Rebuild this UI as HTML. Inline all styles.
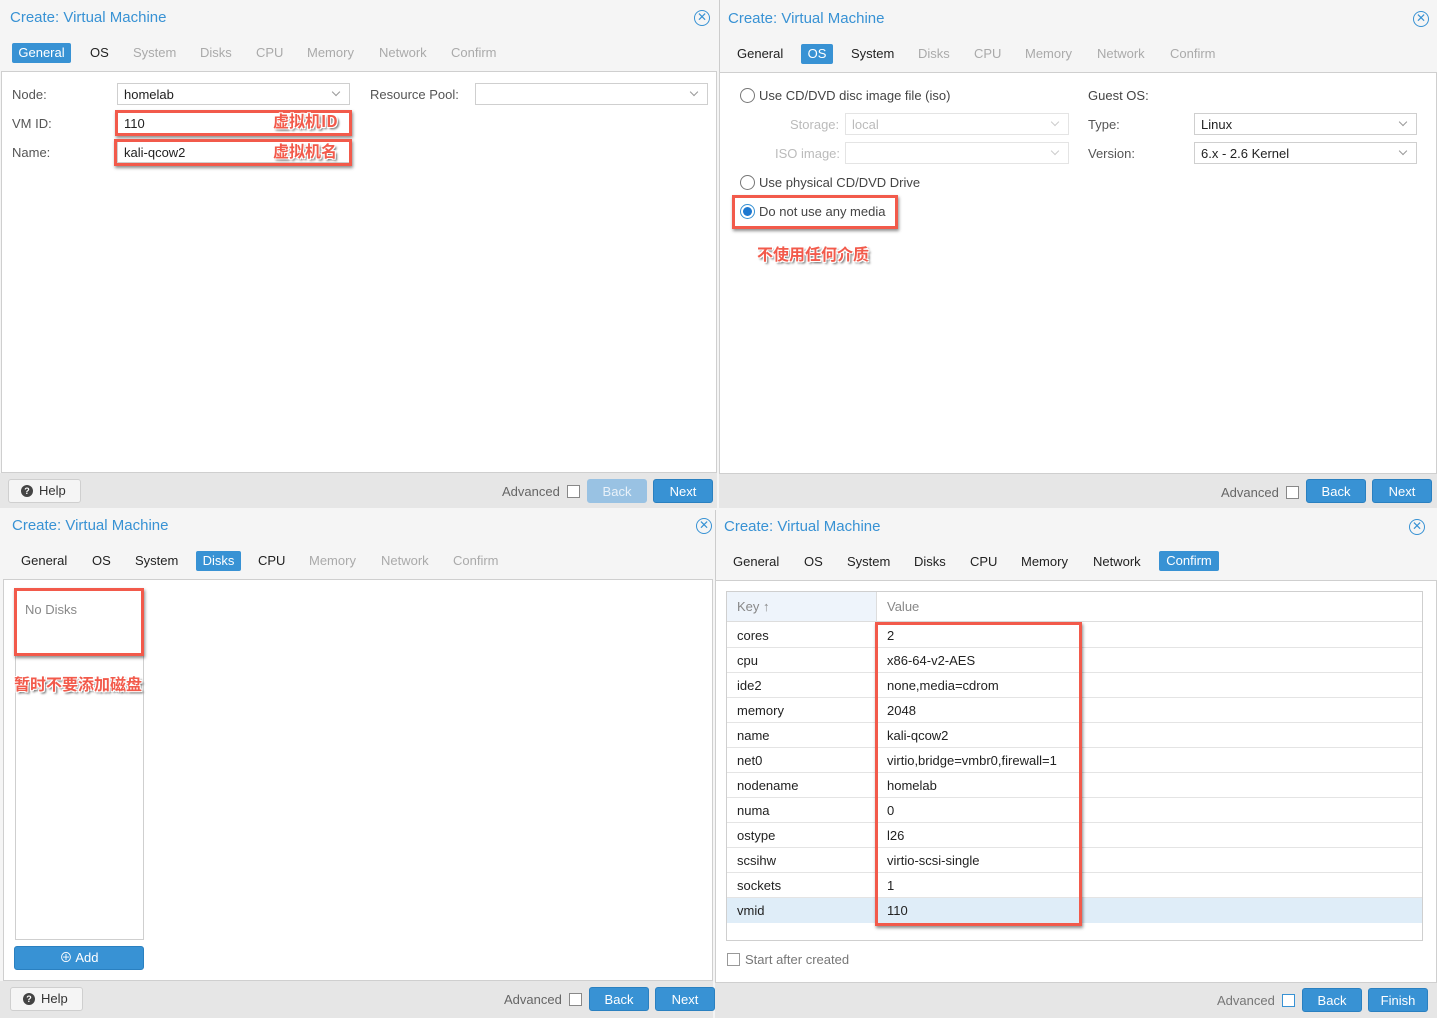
<!DOCTYPE html>
<html><head><meta charset="utf-8"><style>
*{margin:0;padding:0;box-sizing:border-box}
body{width:1437px;height:1018px;position:relative;overflow:hidden;background:#f5f5f5;font-family:"Liberation Sans","Noto Sans CJK SC",sans-serif;font-size:13px;color:#222}
.a{position:absolute;white-space:nowrap;line-height:16px}
.hd{position:absolute;background:#f5f5f5}
.body{position:absolute;background:#fff;border:1px solid #cfcfcf}
.ft{position:absolute;background:#e6e6e6}
.ttl{font-size:15px;color:#3892d4;line-height:18px}
.x{position:absolute;width:16px;height:16px;border:1px solid #3892d4;border-radius:50%;color:#3892d4;font-size:12px;line-height:13px;text-align:center}
.tab{color:#222}
.dis{color:#aaa}
.sel{position:absolute;background:#3892d4;color:#fff;border-radius:2px;text-align:center;line-height:20px}
.inp{position:absolute;background:#fff;border:1px solid #cfcfcf;height:22px;padding-left:6px;line-height:21px}
.inp.d{border-color:#e4e4e4;color:#bbb}
.chev{position:absolute;right:10px;top:5px;width:6px;height:6px;border-right:1px solid #999;border-bottom:1px solid #999;transform:rotate(45deg)}
.lbl{color:#555}
.btn{position:absolute;background:#3892d4;color:#fff;border-radius:3px;text-align:center;line-height:24px;height:24px;border:1px solid #2a80c0}
.btn.dim{background:#99c2e3;border-color:#99c2e3;color:#e8f1f9}
.help{position:absolute;background:#f5f5f5;border:1px solid #cfcfcf;border-radius:3px;height:24px;line-height:22px;padding-left:30px;color:#333}
.help:before{content:"?";position:absolute;left:12px;top:5px;width:12px;height:12px;border-radius:50%;background:#444;color:#fff;font-size:9px;line-height:12px;text-align:center;font-weight:bold}
.cb{position:absolute;width:13px;height:13px;border:1px solid #888;background:#fff}
.red{position:absolute;border:3px solid #f25a4b;box-shadow:1px 2px 3px rgba(0,0,0,.45)}
.cn{position:absolute;color:#f25a4b;font-weight:bold;font-size:16px;line-height:20px;text-shadow:1px 1px 0 #fff,-1px -1px 0 #fff,1px -1px 0 #fff,-1px 1px 0 #fff,2px 2px 2px #555;font-family:"Noto Sans CJK SC","WenQuanYi Zen Hei",sans-serif}
.radio{position:absolute;width:15px;height:15px;border:1px solid #777;border-radius:50%;background:#fff}
.row{position:absolute;left:727px;width:695px;height:25px;border-bottom:1px solid #e4e4e4}
.row span{position:absolute;top:5px;line-height:16px}
</style></head><body>

<!-- Q1 -->
<div class="hd" style="left:0;top:0;width:717px;height:72px"></div>
<div class="a ttl" style="left:10px;top:9px">Create: Virtual Machine</div>
<div class="x" style="left:694px;top:10px">✕</div>
<div class="sel" style="left:12px;top:43px;width:59px">General</div>
<div class="a tab" style="left:90px;top:45px">OS</div>
<div class="a dis" style="left:133px;top:45px">System</div>
<div class="a dis" style="left:200px;top:45px">Disks</div>
<div class="a dis" style="left:256px;top:45px">CPU</div>
<div class="a dis" style="left:307px;top:45px">Memory</div>
<div class="a dis" style="left:379px;top:45px">Network</div>
<div class="a dis" style="left:451px;top:45px">Confirm</div>
<div class="body" style="left:1px;top:71px;width:716px;height:402px"></div>
<div class="a lbl" style="left:12px;top:87px">Node:</div>
<div class="inp" style="left:117px;top:83px;width:233px">homelab<span class="chev"></span></div>
<div class="a lbl" style="left:370px;top:87px">Resource Pool:</div>
<div class="inp" style="left:475px;top:83px;width:233px"><span class="chev"></span></div>
<div class="a lbl" style="left:12px;top:116px">VM ID:</div>
<div class="inp" style="left:117px;top:112px;width:233px">110</div>
<div class="a lbl" style="left:12px;top:145px">Name:</div>
<div class="inp" style="left:117px;top:141px;width:233px">kali-qcow2</div>
<div class="red" style="left:115px;top:110px;width:237px;height:26px"></div>
<div class="red" style="left:114px;top:139px;width:238px;height:27px"></div>
<div class="cn" style="left:273px;top:110px">虚拟机ID</div>
<div class="cn" style="left:273px;top:140px">虚拟机名</div>
<div class="ft" style="left:0;top:473px;width:717px;height:35px"></div>
<div class="help" style="left:8px;top:479px;width:73px">Help</div>
<div class="a" style="left:502px;top:484px;color:#666">Advanced</div>
<div class="cb" style="left:567px;top:485px"></div>
<div class="btn dim" style="left:587px;top:479px;width:60px">Back</div>
<div class="btn" style="left:653px;top:479px;width:60px">Next</div>

<!-- Q2 -->
<div class="hd" style="left:719px;top:0;width:718px;height:73px;border-left:1px solid #ccc"></div>
<div class="a ttl" style="left:728px;top:10px">Create: Virtual Machine</div>
<div class="x" style="left:1413px;top:11px">✕</div>
<div class="a tab" style="left:737px;top:46px">General</div>
<div class="sel" style="left:801px;top:44px;width:32px">OS</div>
<div class="a tab" style="left:851px;top:46px">System</div>
<div class="a dis" style="left:918px;top:46px">Disks</div>
<div class="a dis" style="left:974px;top:46px">CPU</div>
<div class="a dis" style="left:1025px;top:46px">Memory</div>
<div class="a dis" style="left:1097px;top:46px">Network</div>
<div class="a dis" style="left:1170px;top:46px">Confirm</div>
<div class="body" style="left:719px;top:72px;width:718px;height:402px"></div>
<div class="radio" style="left:740px;top:88px"></div>
<div class="a" style="left:759px;top:88px;color:#444">Use CD/DVD disc image file (iso)</div>
<div class="a" style="left:790px;top:117px;color:#bbb">Storage:</div>
<div class="inp d" style="left:845px;top:113px;width:224px">local<span class="chev" style="border-color:#ccc"></span></div>
<div class="a" style="left:775px;top:146px;color:#bbb">ISO image:</div>
<div class="inp d" style="left:845px;top:142px;width:224px"><span class="chev" style="border-color:#ccc"></span></div>
<div class="a" style="left:1088px;top:88px;color:#444">Guest OS:</div>
<div class="a lbl" style="left:1088px;top:117px">Type:</div>
<div class="inp" style="left:1194px;top:113px;width:223px">Linux<span class="chev"></span></div>
<div class="a lbl" style="left:1088px;top:146px">Version:</div>
<div class="inp" style="left:1194px;top:142px;width:223px">6.x - 2.6 Kernel<span class="chev"></span></div>
<div class="radio" style="left:740px;top:175px"></div>
<div class="a" style="left:759px;top:175px;color:#444">Use physical CD/DVD Drive</div>
<div class="radio" style="left:740px;top:204px;border-color:#3892d4"><div style="position:absolute;left:2px;top:2px;width:9px;height:9px;border-radius:50%;background:#1d78d0"></div></div>
<div class="a" style="left:759px;top:204px;color:#444">Do not use any media</div>
<div class="red" style="left:732px;top:195px;width:166px;height:34px"></div>
<div class="cn" style="left:757px;top:243px">不使用任何介质</div>
<div class="ft" style="left:719px;top:474px;width:718px;height:34px"></div>
<div class="a" style="left:1221px;top:485px;color:#666">Advanced</div>
<div class="cb" style="left:1286px;top:486px"></div>
<div class="btn" style="left:1306px;top:479px;width:60px">Back</div>
<div class="btn" style="left:1372px;top:479px;width:60px">Next</div>

<!-- Q3 -->
<div class="hd" style="left:0;top:509px;width:713px;height:71px"></div>
<div class="a ttl" style="left:12px;top:517px">Create: Virtual Machine</div>
<div class="x" style="left:696px;top:518px">✕</div>
<div class="a tab" style="left:21px;top:553px">General</div>
<div class="a tab" style="left:92px;top:553px">OS</div>
<div class="a tab" style="left:135px;top:553px">System</div>
<div class="sel" style="left:196px;top:551px;width:45px">Disks</div>
<div class="a tab" style="left:258px;top:553px">CPU</div>
<div class="a dis" style="left:309px;top:553px">Memory</div>
<div class="a dis" style="left:381px;top:553px">Network</div>
<div class="a dis" style="left:453px;top:553px">Confirm</div>
<div class="body" style="left:3px;top:579px;width:710px;height:402px"></div>
<div style="position:absolute;left:15px;top:590px;width:129px;height:350px;border:1px solid #cfcfcf;background:#fff"></div>
<div class="a" style="left:25px;top:602px;color:#888">No Disks</div>
<div class="red" style="left:14px;top:588px;width:130px;height:68px"></div>
<div class="cn" style="left:14px;top:673px">暂时不要添加磁盘</div>
<div class="btn" style="left:14px;top:946px;width:130px;height:24px;line-height:22px">⊕ Add</div>
<div class="ft" style="left:0;top:981px;width:713px;height:37px"></div>
<div class="help" style="left:10px;top:987px;width:73px">Help</div>
<div class="a" style="left:504px;top:992px;color:#666">Advanced</div>
<div class="cb" style="left:569px;top:993px"></div>
<div class="btn" style="left:589px;top:987px;width:60px">Back</div>
<div class="btn" style="left:655px;top:987px;width:60px">Next</div>

<!-- Q4 -->
<div class="hd" style="left:715px;top:510px;width:722px;height:71px;border-left:1px solid #ccc"></div>
<div class="a ttl" style="left:724px;top:518px">Create: Virtual Machine</div>
<div class="x" style="left:1409px;top:519px">✕</div>
<div class="a tab" style="left:733px;top:554px">General</div>
<div class="a tab" style="left:804px;top:554px">OS</div>
<div class="a tab" style="left:847px;top:554px">System</div>
<div class="a tab" style="left:914px;top:554px">Disks</div>
<div class="a tab" style="left:970px;top:554px">CPU</div>
<div class="a tab" style="left:1021px;top:554px">Memory</div>
<div class="a tab" style="left:1093px;top:554px">Network</div>
<div class="sel" style="left:1159px;top:551px;width:60px">Confirm</div>
<div class="body" style="left:715px;top:580px;width:722px;height:403px"></div>
<div style="position:absolute;left:726px;top:591px;width:697px;height:350px;border:1px solid #cfcfcf;background:#fff"></div>
<div style="position:absolute;left:727px;top:592px;width:150px;height:30px;background:#eef4fb;border-right:1px solid #ddd;border-bottom:1px solid #ddd"></div>
<div style="position:absolute;left:877px;top:592px;width:545px;height:30px;border-bottom:1px solid #ddd"></div>
<div class="a" style="left:737px;top:599px;color:#888">Key ↑</div>
<div class="a" style="left:887px;top:599px;color:#888">Value</div>
<div class="row" style="top:623px"><span style="left:10px">cores</span><span style="left:160px">2</span></div>
<div class="row" style="top:648px"><span style="left:10px">cpu</span><span style="left:160px">x86-64-v2-AES</span></div>
<div class="row" style="top:673px"><span style="left:10px">ide2</span><span style="left:160px">none,media=cdrom</span></div>
<div class="row" style="top:698px"><span style="left:10px">memory</span><span style="left:160px">2048</span></div>
<div class="row" style="top:723px"><span style="left:10px">name</span><span style="left:160px">kali-qcow2</span></div>
<div class="row" style="top:748px"><span style="left:10px">net0</span><span style="left:160px">virtio,bridge=vmbr0,firewall=1</span></div>
<div class="row" style="top:773px"><span style="left:10px">nodename</span><span style="left:160px">homelab</span></div>
<div class="row" style="top:798px"><span style="left:10px">numa</span><span style="left:160px">0</span></div>
<div class="row" style="top:823px"><span style="left:10px">ostype</span><span style="left:160px">l26</span></div>
<div class="row" style="top:848px"><span style="left:10px">scsihw</span><span style="left:160px">virtio-scsi-single</span></div>
<div class="row" style="top:873px"><span style="left:10px">sockets</span><span style="left:160px">1</span></div>
<div class="row" style="top:898px;background:#dfedf8;border:none"><span style="left:10px;top:5px">vmid</span><span style="left:160px;top:5px">110</span></div>
<div class="red" style="left:875px;top:622px;width:207px;height:304px"></div>
<div class="cb" style="left:727px;top:953px;border-color:#999"></div>
<div class="a" style="left:745px;top:952px;color:#777">Start after created</div>
<div class="ft" style="left:715px;top:983px;width:722px;height:35px"></div>
<div class="a" style="left:1217px;top:993px;color:#777">Advanced</div>
<div class="cb" style="left:1282px;top:994px;border-color:#3892d4"></div>
<div class="btn" style="left:1302px;top:988px;width:60px">Back</div>
<div class="btn" style="left:1368px;top:988px;width:60px">Finish</div>
</body></html>
